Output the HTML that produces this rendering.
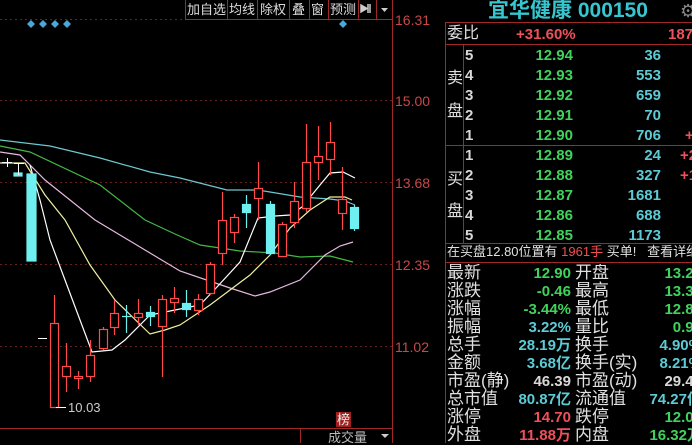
<!DOCTYPE html>
<html><head><meta charset="utf-8"><style>
body{margin:0;width:692px;height:443px;background:#000;overflow:hidden;position:relative;font-family:"Liberation Sans","Noto Sans CJK SC",sans-serif}
.a{position:absolute;white-space:nowrap;line-height:1}
.n{font-family:"Liberation Sans","Noto Sans CJK SC",sans-serif;font-weight:bold;font-size:15px}
.g{color:#3fd35c}.c{color:#5ccbd6}.r{color:#f0505a}.w{color:#d8d8d8}
.lb{font-size:16px;color:#e0e0e0}
.ax{color:#c84848;font-size:14px}
.tb{font-size:13px;color:#ddd}
</style></head><body>
<svg width="692" height="443" style="position:absolute;left:0;top:0">
<g stroke="#6a2020" stroke-dasharray="2,3" stroke-width="1">
<line x1="0" y1="19.5" x2="392" y2="19.5"/><line x1="0" y1="100.5" x2="392" y2="100.5"/><line x1="0" y1="182.5" x2="392" y2="182.5"/><line x1="0" y1="264.5" x2="392" y2="264.5"/><line x1="0" y1="346.5" x2="392" y2="346.5"/></g>
<g stroke="#a02828" stroke-width="1" fill="none">
<line x1="392.5" y1="0" x2="392.5" y2="443"/>
<line x1="0" y1="428.5" x2="392" y2="428.5"/>
<line x1="300.5" y1="428" x2="300.5" y2="443"/>
<path d="M185.5 0V19.5H392M227.5 0V19M257.5 0V19M289.5 0V19M309.5 0V19M328.5 0V19M358.5 0V19M376.5 0V19"/>
<rect x="445.5" y="22.5" width="260" height="430"/>
<line x1="445" y1="44.5" x2="692" y2="44.5"/><line x1="445" y1="145.5" x2="692" y2="145.5"/><line x1="445" y1="243.5" x2="692" y2="243.5"/><line x1="445" y1="262.5" x2="692" y2="262.5"/>
<line x1="463.5" y1="44" x2="463.5" y2="243"/>
</g>
<g fill="#4aa8d8"><path d="M31 20l4 4-4 4-4-4zM43 20l4 4-4 4-4-4zM55 20l4 4-4 4-4-4zM67 20l4 4-4 4-4-4zM343 20l4 4-4 4-4-4z"/></g>
<g fill="none" stroke-width="1.2">
<polyline stroke="#6cc8d0" points="0,140 50,146 100,158 150,172 180,178 227,190 258,190 300,197 330,199 345,201 355,205"/>
<polyline stroke="#44b844" points="0,146 30,152 100,185 145,220 175,234 200,245 240,251 275,253 300,257 330,256 353,262"/>
<polyline stroke="#e8b8e0" points="0,152 20,155 45,180 95,220 140,247 180,271 230,288 255,296 270,292 300,280 325,255 340,246 353,242"/>
<polyline stroke="#f0f0a0" points="0,163 25,163 45,195 65,220 90,265 115,300 150,334 165,330 180,325 210,305 250,275 270,255 290,228 310,210 330,197 345,197 352,200"/>
<polyline stroke="#ffffff" points="30,165 40,200 50,240 65,280 80,320 92,352 112,350 125,340 150,315 175,310 200,305 217,287 240,262 258,218 275,216 290,215 302,207 320,185 330,173 343,172 355,178"/>
</g>
<g stroke="#ff4a4a" fill="#000" stroke-width="1.2">
<line x1="54.5" y1="295" x2="54.5" y2="407"/><rect x="50.5" y="323.5" width="8" height="84"/>
<line x1="66.5" y1="343" x2="66.5" y2="392"/><rect x="62.5" y="366.5" width="8" height="10"/>
<line x1="78.5" y1="371" x2="78.5" y2="389"/><rect x="74.5" y="376.5" width="8" height="2"/>
<line x1="90.5" y1="340" x2="90.5" y2="382"/><rect x="86.5" y="355.5" width="8" height="21"/>
<line x1="103.5" y1="327" x2="103.5" y2="350"/><rect x="99.5" y="329.5" width="8" height="19"/>
<line x1="114.5" y1="300" x2="114.5" y2="335"/><rect x="110.5" y="313.5" width="8" height="14"/>
<line x1="138.5" y1="299" x2="138.5" y2="325"/><rect x="134.5" y="313.5" width="8" height="4"/>
<line x1="162.5" y1="295" x2="162.5" y2="377"/><rect x="158.5" y="299.5" width="8" height="27"/>
<line x1="174.5" y1="287" x2="174.5" y2="313"/><rect x="170.5" y="298.5" width="8" height="4"/>
<line x1="198.5" y1="294" x2="198.5" y2="315"/><rect x="194.5" y="299.5" width="8" height="11"/>
<line x1="210.5" y1="262" x2="210.5" y2="295"/><rect x="206.5" y="264.5" width="8" height="29"/>
<line x1="222.5" y1="192" x2="222.5" y2="265"/><rect x="218.5" y="220.5" width="8" height="33"/>
<line x1="234.5" y1="214" x2="234.5" y2="243"/><rect x="230.5" y="217.5" width="8" height="15"/>
<line x1="258.5" y1="162" x2="258.5" y2="220"/><rect x="254.5" y="188.5" width="8" height="10"/>
<line x1="282.5" y1="222" x2="282.5" y2="257"/><rect x="278.5" y="224.5" width="8" height="32"/>
<line x1="294.5" y1="182" x2="294.5" y2="228"/><rect x="290.5" y="201.5" width="8" height="21"/>
<line x1="306.5" y1="124" x2="306.5" y2="212"/><rect x="302.5" y="162.5" width="8" height="46"/>
<line x1="318.5" y1="126" x2="318.5" y2="180"/><rect x="314.5" y="156.5" width="8" height="6"/>
<line x1="330.5" y1="122" x2="330.5" y2="175"/><rect x="326.5" y="142.5" width="8" height="17"/>
<line x1="342.5" y1="167" x2="342.5" y2="230"/><rect x="338.5" y="199.5" width="8" height="14"/>
</g>
<g stroke="#6ff0f0" fill="#6ff0f0" stroke-width="1.2">
<rect x="27" y="174" width="9" height="87"/>
<rect x="14" y="173" width="8" height="3"/>
<line x1="126.5" y1="305" x2="126.5" y2="333"/><line x1="122" y1="316.5" x2="131" y2="316.5"/>
<line x1="150.5" y1="306" x2="150.5" y2="326"/><rect x="146.5" y="312.5" width="8" height="4"/>
<line x1="186.5" y1="290" x2="186.5" y2="317"/><rect x="182.5" y="303.5" width="8" height="6"/>
<line x1="246.5" y1="195" x2="246.5" y2="228"/><rect x="242.5" y="204.5" width="8" height="8"/>
<line x1="270.5" y1="201" x2="270.5" y2="255"/><rect x="266.5" y="204.5" width="8" height="49"/>
<line x1="354.5" y1="205" x2="354.5" y2="231"/><rect x="350.5" y="207.5" width="8" height="21"/>
</g>
<g stroke="#fff" stroke-width="1"><line x1="2" y1="162.5" x2="12" y2="162.5"/><line x1="7.5" y1="158" x2="7.5" y2="167"/><line x1="14" y1="163.5" x2="24" y2="163.5"/><line x1="18.5" y1="163" x2="18.5" y2="175"/><line x1="38" y1="338.5" x2="47" y2="338.5"/><line x1="56" y1="407.5" x2="66" y2="407.5"/></g>
<path d="M361 5l6 3.5-6 3.5zM368 4v9M370 4v9" stroke="#ccc" fill="#ccc" stroke-width="1.5"/>
<path d="M381 8h7l-3.5 4z" fill="#ccc"/>
<path d="M381 434h8l-4 4z" fill="#ccc"/>
</svg>
<div class="a tb" style="left:187px;top:3px">加自选</div>
<div class="a tb" style="left:229px;top:3px">均线</div>
<div class="a tb" style="left:260px;top:3px">除权</div>
<div class="a tb" style="left:292px;top:3px">叠</div>
<div class="a tb" style="left:311px;top:3px">窗</div>
<div class="a tb" style="left:330px;top:3px">预测</div>
<div class="a ax" style="left:395px;top:13px">16.31</div>
<div class="a ax" style="left:395px;top:94px">15.00</div>
<div class="a ax" style="left:395px;top:176px">13.68</div>
<div class="a ax" style="left:395px;top:258px">12.35</div>
<div class="a ax" style="left:395px;top:340px">11.02</div>
<div class="a" style="left:68px;top:401px;color:#ccc;font-size:13px">10.03</div>
<div class="a" style="left:336px;top:412px;background:#a02020;color:#eee;font-size:13px;padding:1px 1px">榜</div>
<div class="a" style="left:328px;top:431px;color:#bbb;font-size:13px">成交量</div>
<div class="a c" style="left:488px;top:0px;font-size:21px;font-weight:bold;color:#37c6d0">宜华健康 000150</div>
<div class="a" style="left:680px;top:2px;color:#888;font-size:18px">⚙</div>
<div class="a lb" style="left:447px;top:26px">委比</div>
<div class="a n r" style="left:516px;top:27px">+31.60%</div>
<div class="a n r" style="left:668px;top:27px">187</div>
<div class="a lb" style="left:447px;top:71px">卖</div><div class="a lb" style="left:447px;top:104px">盘</div>
<div class="a lb" style="left:447px;top:172px">买</div><div class="a lb" style="left:447px;top:204px">盘</div>
<div style="position:absolute;left:465px;top:47px;width:230px">
<div class="a n w" style="left:0;top:1px">5</div><div class="a n g" style="right:122px;top:1px">12.94</div><div class="a n c" style="right:34px;top:1px">36</div>
<div class="a n w" style="left:0;top:21px">4</div><div class="a n g" style="right:122px;top:21px">12.93</div><div class="a n c" style="right:34px;top:21px">553</div>
<div class="a n w" style="left:0;top:41px">3</div><div class="a n g" style="right:122px;top:41px">12.92</div><div class="a n c" style="right:34px;top:41px">659</div>
<div class="a n w" style="left:0;top:61px">2</div><div class="a n g" style="right:122px;top:61px">12.91</div><div class="a n c" style="right:34px;top:61px">70</div>
<div class="a n w" style="left:0;top:81px">1</div><div class="a n g" style="right:122px;top:81px">12.90</div><div class="a n c" style="right:34px;top:81px">706</div><div class="a n r" style="left:220px;top:81px">+</div>
<div class="a n w" style="left:0;top:101px">1</div><div class="a n g" style="right:122px;top:101px">12.89</div><div class="a n c" style="right:34px;top:101px">24</div><div class="a n r" style="left:215px;top:101px">+2</div>
<div class="a n w" style="left:0;top:121px">2</div><div class="a n g" style="right:122px;top:121px">12.88</div><div class="a n c" style="right:34px;top:121px">327</div><div class="a n r" style="left:215px;top:121px">+1</div>
<div class="a n w" style="left:0;top:141px">3</div><div class="a n g" style="right:122px;top:141px">12.87</div><div class="a n c" style="right:34px;top:141px">1681</div>
<div class="a n w" style="left:0;top:161px">4</div><div class="a n g" style="right:122px;top:161px">12.86</div><div class="a n c" style="right:34px;top:161px">688</div>
<div class="a n w" style="left:0;top:181px">5</div><div class="a n g" style="right:122px;top:181px">12.85</div><div class="a n c" style="right:34px;top:181px">1173</div>
</div>
<div class="a" style="left:447px;top:245px;font-size:13px;color:#e0e0e0">在买盘12.80位置有 <span style="color:#f05050">1961手</span> 买单!&nbsp;&nbsp; 查看详细</div>
<div style="position:absolute;left:0;top:264px;width:692px;height:179px;overflow:hidden">
<div class="a lb" style="left:447px;top:0px;line-height:18px;font-size:17px">最新<br>涨跌<br>涨幅<br>振幅<br>总手<br>金额<br>市盈(静)<br>总市值<br>涨停<br>外盘</div>
<div class="a lb" style="left:575px;top:0px;line-height:18px;font-size:17px">开盘<br>最高<br>最低<br>量比<br>换手<br>换手(实)<br>市盈(动)<br>流通值<br>跌停<br>内盘</div>
<div class="a n" style="right:121px;top:1px;line-height:18px;text-align:right"><span class="g">12.90</span><br><span class="g">-0.46</span><br><span class="g">-3.44%</span><br><span class="c">3.22%</span><br><span class="c">28.19万</span><br><span class="c">3.68亿</span><br><span class="w">46.39</span><br><span class="c">80.87亿</span><br><span class="r">14.70</span><br><span class="r">11.88万</span></div>
<div class="a n" style="left:620px;top:1px;line-height:18px;text-align:right;width:82px"><span class="g">13.20</span><br><span class="g">13.38</span><br><span class="g">12.87</span><br><span class="g">0.93</span><br><span class="c">4.90%</span><br><span class="c">8.21%</span><br><span class="w">29.48</span><br><span class="c">74.27亿</span><br><span class="g">12.03</span><br><span class="g">16.32万</span></div>
</div>
</body></html>
